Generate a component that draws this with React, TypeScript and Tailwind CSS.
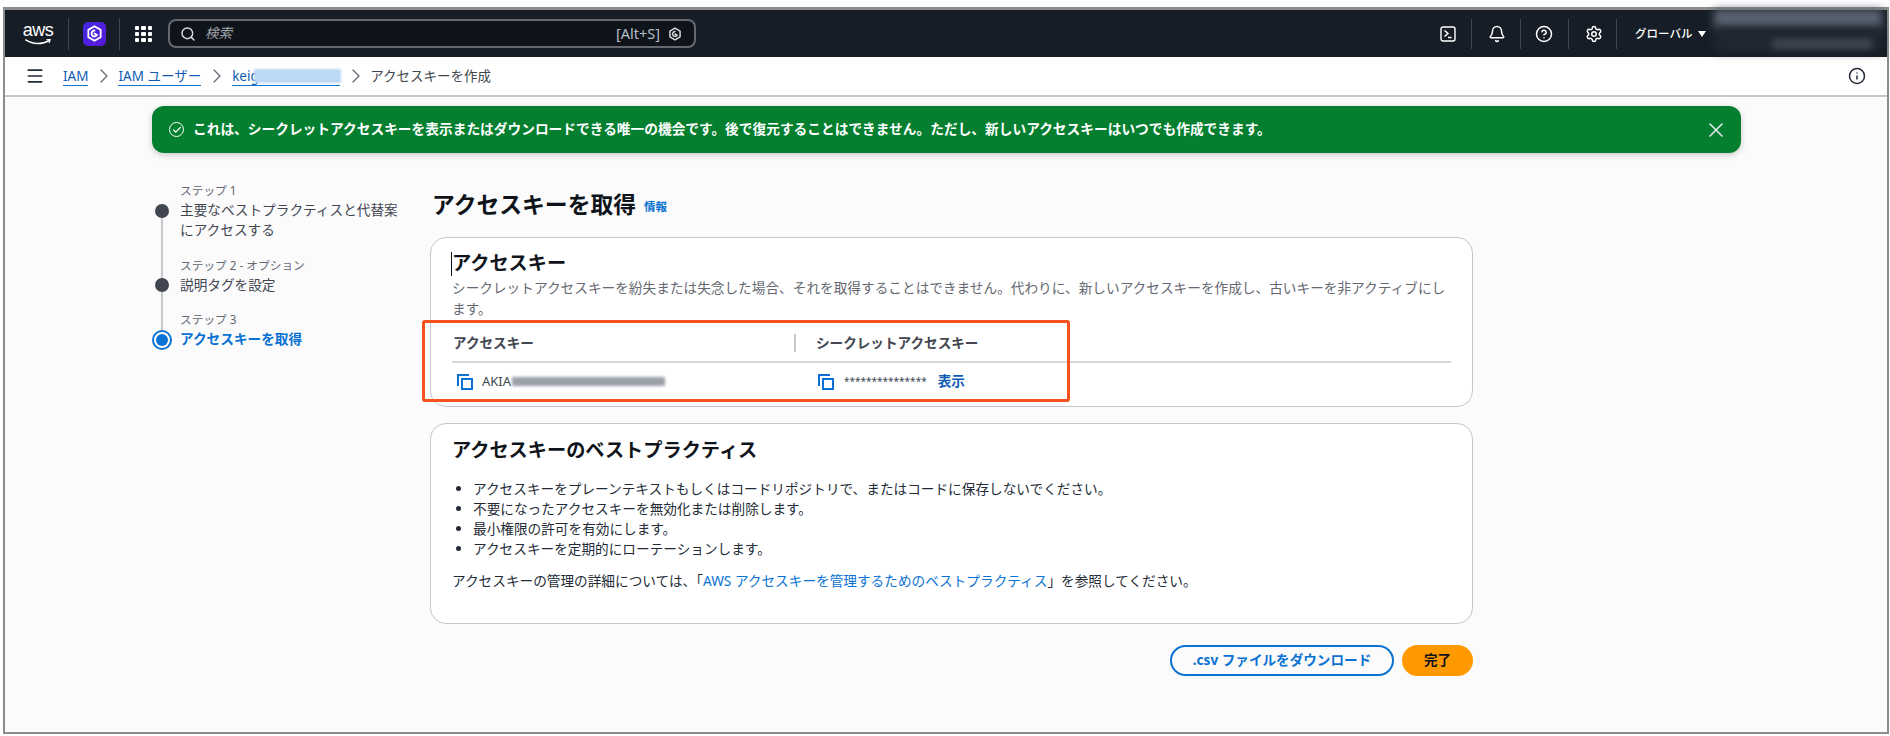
import { Bell, Check, CircleHelp, Info, Menu, Search, Settings, X, ChevronRight } from 'lucide-react'

const font = "font-['Noto_Sans','Noto_Sans_CJK_JP',sans-serif]"

const steps = [
  { label: 'ステップ 1', title: ['主要なベストプラクティスと代替案', 'にアクセスする'] },
  { label: 'ステップ 2 - オプション', title: ['説明タグを設定'] },
  { label: 'ステップ 3', title: ['アクセスキーを取得'], active: true },
]

const practices = [
  'アクセスキーをプレーンテキストもしくはコードリポジトリで、またはコードに保存しないでください。',
  '不要になったアクセスキーを無効化または削除します。',
  '最小権限の許可を有効にします。',
  'アクセスキーを定期的にローテーションします。',
]

function HexMark({ className }: { className: string }) {
  return (
    <svg viewBox="0 0 16 16" fill="none" stroke="currentColor" strokeWidth="1.7" className={className}>
      <path d="M8 1.2l5.8 3.4v6.8L8 14.8l-5.8-3.4V4.6z" strokeLinejoin="round" />
      <path d="M8 5.2a2.8 2.8 0 1 0 2.4 4.3L8 8" strokeLinecap="round" />
    </svg>
  )
}

function CopyIcon() {
  return (
    <svg viewBox="0 0 16 16" fill="none" stroke="#0972d3" strokeWidth="2" className="h-4 w-4 shrink-0">
      <path d="M1 12V1h11" />
      <rect x="5" y="5" width="10" height="10" />
    </svg>
  )
}

function TopNav() {
  return (
    <header className="flex h-[47px] items-center bg-[#161d26] text-white">
      <div className="relative ml-[18px] flex h-[24px] w-[30px] flex-col items-center">
        <span className="text-[18px] leading-[17px] font-normal tracking-[-0.5px] font-['Liberation_Sans',sans-serif]">aws</span>
        <svg viewBox="0 0 30 8" fill="none" className="h-[8px] w-[30px]">
          <path d="M1 1c8 5.5 19 5.5 27 .5" stroke="#fff" strokeWidth="1.6" strokeLinecap="round" />
          <path d="M25 .8l4-.3-1.2 3.6" stroke="#fff" strokeWidth="1.3" strokeLinecap="round" />
        </svg>
      </div>
      <span className="ml-[15px] mr-[14px] h-[32px] w-px bg-[#424650]" />
      <div className="flex h-[24px] w-[23px] items-center justify-center rounded-[5px] bg-gradient-to-br from-[#3f2ae0] to-[#5a14d8]">
        <HexMark className="h-[17px] w-[17px] text-white" />
      </div>
      <span className="ml-[13px] mr-[15px] h-[32px] w-px bg-[#424650]" />
      <div className="grid h-[16px] w-[17px] grid-cols-3 gap-[2px]">
        {Array.from({ length: 9 }).map((_, i) => (
          <span key={i} className="rounded-[1px] bg-white" />
        ))}
      </div>
      <div className="ml-[16px] flex h-[29px] w-[528px] items-center rounded-[8px] border-2 border-[#656871] bg-[#0f141a] pl-[10px] pr-[12px]">
        <Search className="h-[16px] w-[16px] text-[#d5dbdb]" strokeWidth={2.2} />
        <span className="ml-[9px] text-[13.5px] italic text-[#a0a4ab]">検索</span>
        <span className="ml-auto text-[14.5px] text-[#b6bec9]">[Alt+S]</span>
        <HexMark className="ml-[8px] h-[14px] w-[14px] text-[#d5dbdb]" />
      </div>
      <div className="ml-[744px] flex items-center">
        <svg viewBox="0 0 16 16" fill="none" stroke="#fff" strokeWidth="1.4" className="h-[16px] w-[16px]">
          <rect x="1" y="1" width="14" height="14" rx="2" />
          <path d="M4.5 4.5L8 7.5l-3.5 3M8 11.5h3.5" strokeWidth="1.5" />
        </svg>
        <span className="ml-[15px] h-[30px] w-px bg-[#424650]" />
        <Bell className="ml-[16px] h-[18px] w-[18px]" strokeWidth={2} />
        <span className="ml-[14px] h-[30px] w-px bg-[#424650]" />
        <CircleHelp className="ml-[14px] h-[18px] w-[18px]" strokeWidth={2} />
        <span className="ml-[15px] h-[30px] w-px bg-[#424650]" />
        <Settings className="ml-[16px] h-[18px] w-[18px]" strokeWidth={2} />
        <span className="ml-[13px] h-[30px] w-px bg-[#424650]" />
        <span className="ml-[18px] whitespace-nowrap text-[11.5px] font-medium">グローバル</span>
        <span className="ml-[6px] h-0 w-0 border-x-[4px] border-t-[6px] border-x-transparent border-t-white" />
      </div>
    </header>
  )
}

function SubNav() {
  return (
    <div className="flex h-[40px] items-center border-b-2 border-[#c6c6cd] bg-white pr-[21px] text-[13.5px]">
      <Menu className="ml-[20px] h-[20px] w-[20px] text-[#232b37]" strokeWidth={2} />
      <a className="ml-[18px] border-b border-[#0972d3] leading-[18px] text-[#0f5bb5]">IAM</a>
      <ChevronRight className="ml-[4px] mr-[2px] h-[24px] w-[24px] text-[#656871]" strokeWidth={1.3} />
      <a className="border-b border-[#0972d3] leading-[18px] text-[#0f5bb5]">IAM ユーザー</a>
      <ChevronRight className="ml-[4px] mr-[3px] h-[24px] w-[24px] text-[#656871]" strokeWidth={1.3} />
      <a className="relative w-[108px] border-b border-[#0972d3] leading-[18px] text-[#0f5bb5]">
        keig
        <span className="absolute left-[22px] top-[2px] h-[14px] w-[87px] bg-[#bcd8f5] blur-[1px]" />
      </a>
      <ChevronRight className="ml-[4px] mr-[2px] h-[24px] w-[24px] text-[#656871]" strokeWidth={1.3} />
      <span className="text-[#414750]">アクセスキーを作成</span>
      <Info className="ml-auto h-[18px] w-[18px] text-[#232b37]" strokeWidth={2} />
    </div>
  )
}

function StepList() {
  return (
    <ol className="w-[278px]">
      {steps.map((step, i) => (
        <li key={step.label} className="flex">
          <div className="flex w-[20px] shrink-0 flex-col items-center">
            <span className={i === 0 ? 'h-[24px]' : step.active ? 'h-[21px] w-[2px] bg-[#c6c6cd]' : 'h-[23px] w-[2px] bg-[#c6c6cd]'} />
            {step.active ? (
              <span className="flex h-[20px] w-[20px] items-center justify-center rounded-full border-2 border-[#0972d3] bg-white">
                <span className="h-[12px] w-[12px] rounded-full bg-[#0972d3]" />
              </span>
            ) : (
              <span className="h-[14px] w-[14px] shrink-0 rounded-full bg-[#424650]" />
            )}
            {!step.active && <span className="w-[2px] grow bg-[#c6c6cd]" />}
          </div>
          <div className={i === 0 ? 'ml-[8px] pb-[15px]' : 'ml-[8px] pb-[14px]'}>
            <p className="text-[11.7px] leading-[20px] text-[#656871]">{step.label}</p>
            <p className={step.active ? 'text-[13.65px] font-bold leading-[20px] text-[#0972d3]' : 'text-[13.65px] leading-[20px] text-[#424650]'}>
              {step.title.map((line) => (
                <span key={line} className="block">{line}</span>
              ))}
            </p>
          </div>
        </li>
      ))}
    </ol>
  )
}

function KeyCard() {
  return (
    <section className="relative h-[170px] rounded-[16px] border border-[#c6c6cd] bg-white px-[21px] pt-[11px]">
      <h2 className="relative text-[19.2px] font-bold leading-[28px] text-[#0f141a]">
        <span className="absolute -left-[1px] top-[3px] h-[24px] w-px bg-[#0f141a]" />
        アクセスキー
      </h2>
      <p className="mt-[1px] text-[13.67px] leading-[20.5px] text-[#656871]">
        シークレットアクセスキーを紛失または失念した場合、それを取得することはできません。代わりに、新しいアクセスキーを作成し、古いキーを非アクティブにします。
      </p>
      <div className="mt-[7px] grid grid-cols-[342px_1fr] items-center border-b-2 border-[#d5d7dc] pb-[8px] pt-[7px] text-[13.6px] font-bold text-[#424650]">
        <span className="pl-[1px]">アクセスキー</span>
        <span className="border-l-2 border-[#c6c6cd] pl-[20px] leading-[18px]">シークレットアクセスキー</span>
      </div>
      <div className="grid grid-cols-[342px_1fr] pt-[8px] text-[13px] text-[#414750]">
        <div className="flex items-center pl-[5px]">
          <CopyIcon />
          <span className="ml-[9px]">AKIA</span>
          <span className="ml-[1px] h-[9px] w-[153px] bg-[#9aa0aa] blur-[1.5px]" />
        </div>
        <div className="flex items-center pl-[24px]">
          <CopyIcon />
          <span className="ml-[10px] text-[10px]">***************</span>
          <span className="ml-[11px] text-[13.6px] font-bold text-[#0f5bb5]">表示</span>
        </div>
      </div>
      <div className="absolute -left-[9px] top-[82px] h-[82px] w-[648px] rounded-[3px] border-[3px] border-[#f4511e]" />
    </section>
  )
}

function PracticeCard() {
  return (
    <section className="mt-[16px] h-[201px] rounded-[16px] border border-[#c6c6cd] bg-white px-[21px] pt-[12px]">
      <h2 className="text-[19.2px] font-bold leading-[28px] text-[#0f141a]">アクセスキーのベストプラクティス</h2>
      <ul className="mt-[15px] list-disc pl-[21px] text-[13.65px] leading-[20px] text-[#232b37]">
        {practices.map((text) => (
          <li key={text}>{text}</li>
        ))}
      </ul>
      <p className="mt-[12px] text-[13.65px] leading-[20px] text-[#232b37]">
        アクセスキーの管理の詳細については、「<a className="text-[#0972d3]">AWS アクセスキーを管理するためのベストプラクティス</a>」を参照してください。
      </p>
    </section>
  )
}

export default function App() {
  return (
    <div className={`${font} relative h-[736px] w-[1890px] overflow-hidden bg-white pl-[3px] pr-[1px] pt-[7px]`}>
      <div className="h-[727px] border-2 border-t-[3px] border-[#8c8c8c] bg-[#fbfbfc]">
        <TopNav />
        <SubNav />
        <div className="ml-[147px] w-[1589px]">
          <div className="relative mt-[9px] flex h-[47px] items-center rounded-[12px] bg-[#037f2f] pl-[17px] pr-[13px] text-[13.71px] font-bold text-white shadow-[0_2px_6px_rgba(0,0,0,0.2)]">
            <span className="flex h-[15px] w-[15px] items-center justify-center rounded-full border-[1.5px] border-white">
              <Check className="h-[10px] w-[10px]" strokeWidth={3} />
            </span>
            <span className="ml-[9px]">これは、シークレットアクセスキーを表示またはダウンロードできる唯一の機会です。後で復元することはできません。ただし、新しいアクセスキーはいつでも作成できます。</span>
            <X className="ml-auto h-[24px] w-[24px] text-[#e6e8ea]" strokeWidth={1.6} />
          </div>
          <div className="mt-[27px] flex">
            <StepList />
            <main className="w-[1043px] pt-[10px]">
              <div className="flex h-[30px] items-center pl-[2px]">
                <h1 className="text-[22.8px] font-bold leading-[30px] text-[#0f141a]">アクセスキーを取得</h1>
                <a className="ml-[8px] mt-[3px] text-[11.5px] font-bold text-[#0972d3]">情報</a>
              </div>
              <div className="mt-[17px]">
                <KeyCard />
                <PracticeCard />
              </div>
              <div className="mt-[21px] flex justify-end gap-[8px] text-[13.6px] font-bold">
                <button className="h-[31px] w-[224px] rounded-full border-2 border-[#0972d3] text-[#0972d3]">.csv ファイルをダウンロード</button>
                <button className="h-[31px] w-[71px] rounded-full bg-[#ff9900] text-[#0f141a]">完了</button>
              </div>
            </main>
          </div>
        </div>
      </div>
      <div className="absolute left-[1714px] top-[9px] h-[20px] w-[168px] bg-[#5a6370] blur-[4px]" />
      <div className="absolute left-[1714px] top-[27px] h-[25px] w-[168px] bg-[#1f2731] blur-[4px]" />
      <div className="absolute left-[1772px] top-[39px] h-[10px] w-[100px] bg-[#3d4552] blur-[3px]" />
    </div>
  )
}
